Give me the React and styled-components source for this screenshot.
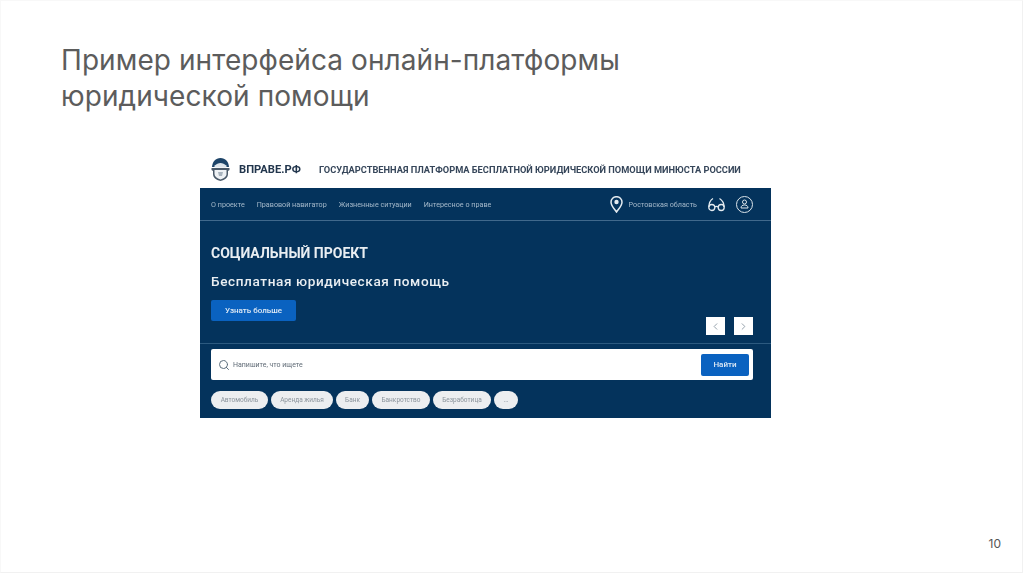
import React from "react";
import styled, { createGlobalStyle } from "styled-components";
import { ChevronLeft, ChevronRight, Search } from "lucide-react";

const GlobalStyle = createGlobalStyle`
  html, body {
    margin: 0;
    padding: 0;
    background: #fff;
  }
  * {
    box-sizing: border-box;
  }
`;

const Slide = styled.div`
  position: relative;
  width: 1023px;
  height: 573px;
  background: #fff;
  border: 1px solid #f8f8f8;
  border-right-color: #f1f1f1;
  border-bottom-color: #f1f1f1;
  font-family: Inter, "Open Sans", sans-serif;
  overflow: hidden;
`;

const Title = styled.h1`
  margin: 0;
  padding: 41px 0 0 60px;
  font-size: 28px;
  line-height: 36px;
  font-weight: 400;
  letter-spacing: 0.08px;
  color: #5c5c5c;
`;

const Shot = styled.div`
  width: 571px;
  margin: 36px 0 0 199px;
  filter: blur(0.6px);
  font-family: Roboto, sans-serif;
`;

const TopBar = styled.div`
  display: flex;
  align-items: center;
  height: 38px;
  padding-left: 11px;
  background: #fff;
`;

const Brand = styled.div`
  margin-left: 9px;
  font-size: 11.2px;
  font-weight: 700;
  color: #22364d;
`;

const Tagline = styled.div`
  margin-left: 18px;
  font-size: 9.25px;
  font-weight: 700;
  color: #36465a;
  white-space: nowrap;
`;

const Panel = styled.div`
  height: 230px;
  background: #04335c;
  color: #fff;
`;

const Nav = styled.div`
  display: flex;
  align-items: center;
  height: 33px;
  padding: 0 18px 0 11px;
  border-bottom: 1px solid #41698c;
`;

const NavLink = styled.span`
  margin-right: 12px;
  font-size: 7.2px;
  color: #a6bacb;
  white-space: nowrap;
`;

const NavRight = styled.div`
  display: flex;
  align-items: center;
  margin-left: auto;
`;

const Region = styled.span`
  margin: 0 11px 0 6px;
  font-size: 7.2px;
  color: #a6bacb;
`;

const RoundIcon = styled.span`
  display: flex;
  align-items: center;
  justify-content: center;
  width: 17px;
  height: 17px;
  margin-left: 11px;
  border: 1.3px solid #dbe4ea;
  border-radius: 50%;
`;

const Hero = styled.div`
  display: flex;
  align-items: flex-end;
  justify-content: space-between;
  height: 123px;
  padding: 0 18px 8px 11px;
  border-bottom: 1px solid #2c5a80;
`;

const HeroText = styled.div`
  align-self: flex-start;
  padding-top: 23px;
`;

const HeroTitle = styled.div`
  font-size: 14px;
  line-height: 18px;
  font-weight: 700;
  color: #e9eef2;
`;

const HeroSub = styled.div`
  margin-top: 10px;
  font-size: 13.6px;
  line-height: 18px;
  font-weight: 500;
  letter-spacing: 0.6px;
  color: #e9eef2;
`;

const Button = styled.div`
  display: flex;
  align-items: center;
  justify-content: center;
  width: ${(p) => p.$width}px;
  height: ${(p) => p.$height}px;
  background: #0a62c0;
  border-radius: 2px;
  font-size: 8px;
  font-weight: 500;
  color: #dfeaf5;
`;

const LearnMore = styled(Button)`
  margin-top: 10px;
`;

const Arrows = styled.div`
  display: flex;
  gap: 9px;
`;

const Arrow = styled.div`
  display: flex;
  align-items: center;
  justify-content: center;
  width: 19px;
  height: 18px;
  background: #fff;
  color: #8d9aa5;
`;

const SearchBar = styled.div`
  display: flex;
  align-items: center;
  height: 31px;
  margin: 5px 18px 0 11px;
  padding: 0 4px 0 7px;
  background: #fff;
  border-radius: 2px;
`;

const SearchHint = styled.span`
  flex: 1;
  margin-left: 3px;
  font-size: 7px;
  color: #5f6a75;
`;

const Chips = styled.div`
  display: flex;
  gap: 3px;
  margin: 11px 0 0 11px;
`;

const Chip = styled.div`
  display: flex;
  align-items: center;
  justify-content: center;
  width: ${(p) => p.$width}px;
  height: 18px;
  background: #eceef0;
  border-radius: 9px;
  font-size: 6.5px;
  color: #8b949c;
`;

const PageNumber = styled.div`
  position: absolute;
  right: 21px;
  bottom: 21px;
  font-size: 12px;
  color: #555;
`;

const navLinks = ["О проекте", "Правовой навигатор", "Жизненные ситуации", "Интересное о праве"];

const chips = [
  ["Автомобиль", 57],
  ["Аренда жилья", 62],
  ["Банк", 33],
  ["Банкротство", 58],
  ["Безработица", 58],
  ["...", 24],
];

function Logo() {
  return (
    <svg width="19" height="25" viewBox="0 0 19 25">
      <path d="M9.500 1C4.500 1 1.500 4.500 1 10h17c-.5-5.500-3.500-9-8.500-9z" fill="#1d4468" />
      <path d="M3 9c2.500-2 4.500-3 6.500-3s4 1 6.500 3l-1.500 1.500h-10z" fill="#dfe6ec" />
      <path d="M.5 11h18v2l-1.500 1v3c0 3.500-3 6-7.500 7-4.500-1-7.500-3.500-7.500-7v-3l-1.500-1z" fill="#4a5968" />
      <path d="M3.500 13h12v4c0 2.500-2.500 4.500-6 5.500-3.500-1-6-3-6-5.500z" fill="#eef1f4" />
      <path d="M7 15h5l-1 4h-3z" fill="#a9b4be" />
    </svg>
  );
}

function Pin() {
  return (
    <svg width="13" height="17" viewBox="0 0 13 17" fill="none">
      <path
        d="M6.500 16C4 12.500 1 9.500 1 6.200a5.500 5.500 0 0 1 11 0C12 9.500 9 12.500 6.500 16z"
        stroke="#e4ebf0"
        strokeWidth="1.500"
      />
      <circle cx="6.500" cy="6" r="2.200" fill="#e4ebf0" />
    </svg>
  );
}

function Glasses() {
  return (
    <svg width="17" height="15" viewBox="0 0 17 15" fill="none" stroke="#e4ebf0" strokeWidth="1.300">
      <circle cx="3.800" cy="10.500" r="3" />
      <circle cx="13.200" cy="10.500" r="3" />
      <path d="M6.800 10c1-.7 2.400-.7 3.400 0M.9 10C1 6 2.500 3 5 1.500M16.100 10C16 6 14 3 11.500 1.500" />
    </svg>
  );
}

function UserIcon() {
  return (
    <svg width="9" height="10" viewBox="0 0 9 10" fill="none" stroke="#dbe4ea" strokeWidth="1">
      <circle cx="4.500" cy="3" r="2" />
      <path d="M1 9c0-2 1.300-3 3.500-3S8 7 8 9z" />
    </svg>
  );
}

export default function App() {
  return (
    <Slide>
      <GlobalStyle />
      <Title>
        Пример интерфейса онлайн-платформы
        <br />
        юридической помощи
      </Title>
      <Shot>
        <TopBar>
          <Logo />
          <Brand>ВПРАВЕ.РФ</Brand>
          <Tagline>ГОСУДАРСТВЕННАЯ ПЛАТФОРМА БЕСПЛАТНОЙ ЮРИДИЧЕСКОЙ ПОМОЩИ МИНЮСТА РОССИИ</Tagline>
        </TopBar>
        <Panel>
          <Nav>
            {navLinks.map((link) => (
              <NavLink key={link}>{link}</NavLink>
            ))}
            <NavRight>
              <Pin />
              <Region>Ростовская область</Region>
              <Glasses />
              <RoundIcon>
                <UserIcon />
              </RoundIcon>
            </NavRight>
          </Nav>
          <Hero>
            <HeroText>
              <HeroTitle>СОЦИАЛЬНЫЙ ПРОЕКТ</HeroTitle>
              <HeroSub>Бесплатная юридическая помощь</HeroSub>
              <LearnMore $width={85} $height={21}>
                Узнать больше
              </LearnMore>
            </HeroText>
            <Arrows>
              <Arrow>
                <ChevronLeft size={11} />
              </Arrow>
              <Arrow>
                <ChevronRight size={11} />
              </Arrow>
            </Arrows>
          </Hero>
          <SearchBar>
            <Search size={12} color="#5d6f7e" />
            <SearchHint>Напишите, что ищете</SearchHint>
            <Button $width={48} $height={22}>
              Найти
            </Button>
          </SearchBar>
          <Chips>
            {chips.map(([label, width]) => (
              <Chip key={label} $width={width}>
                {label}
              </Chip>
            ))}
          </Chips>
        </Panel>
      </Shot>
      <PageNumber>10</PageNumber>
    </Slide>
  );
}
